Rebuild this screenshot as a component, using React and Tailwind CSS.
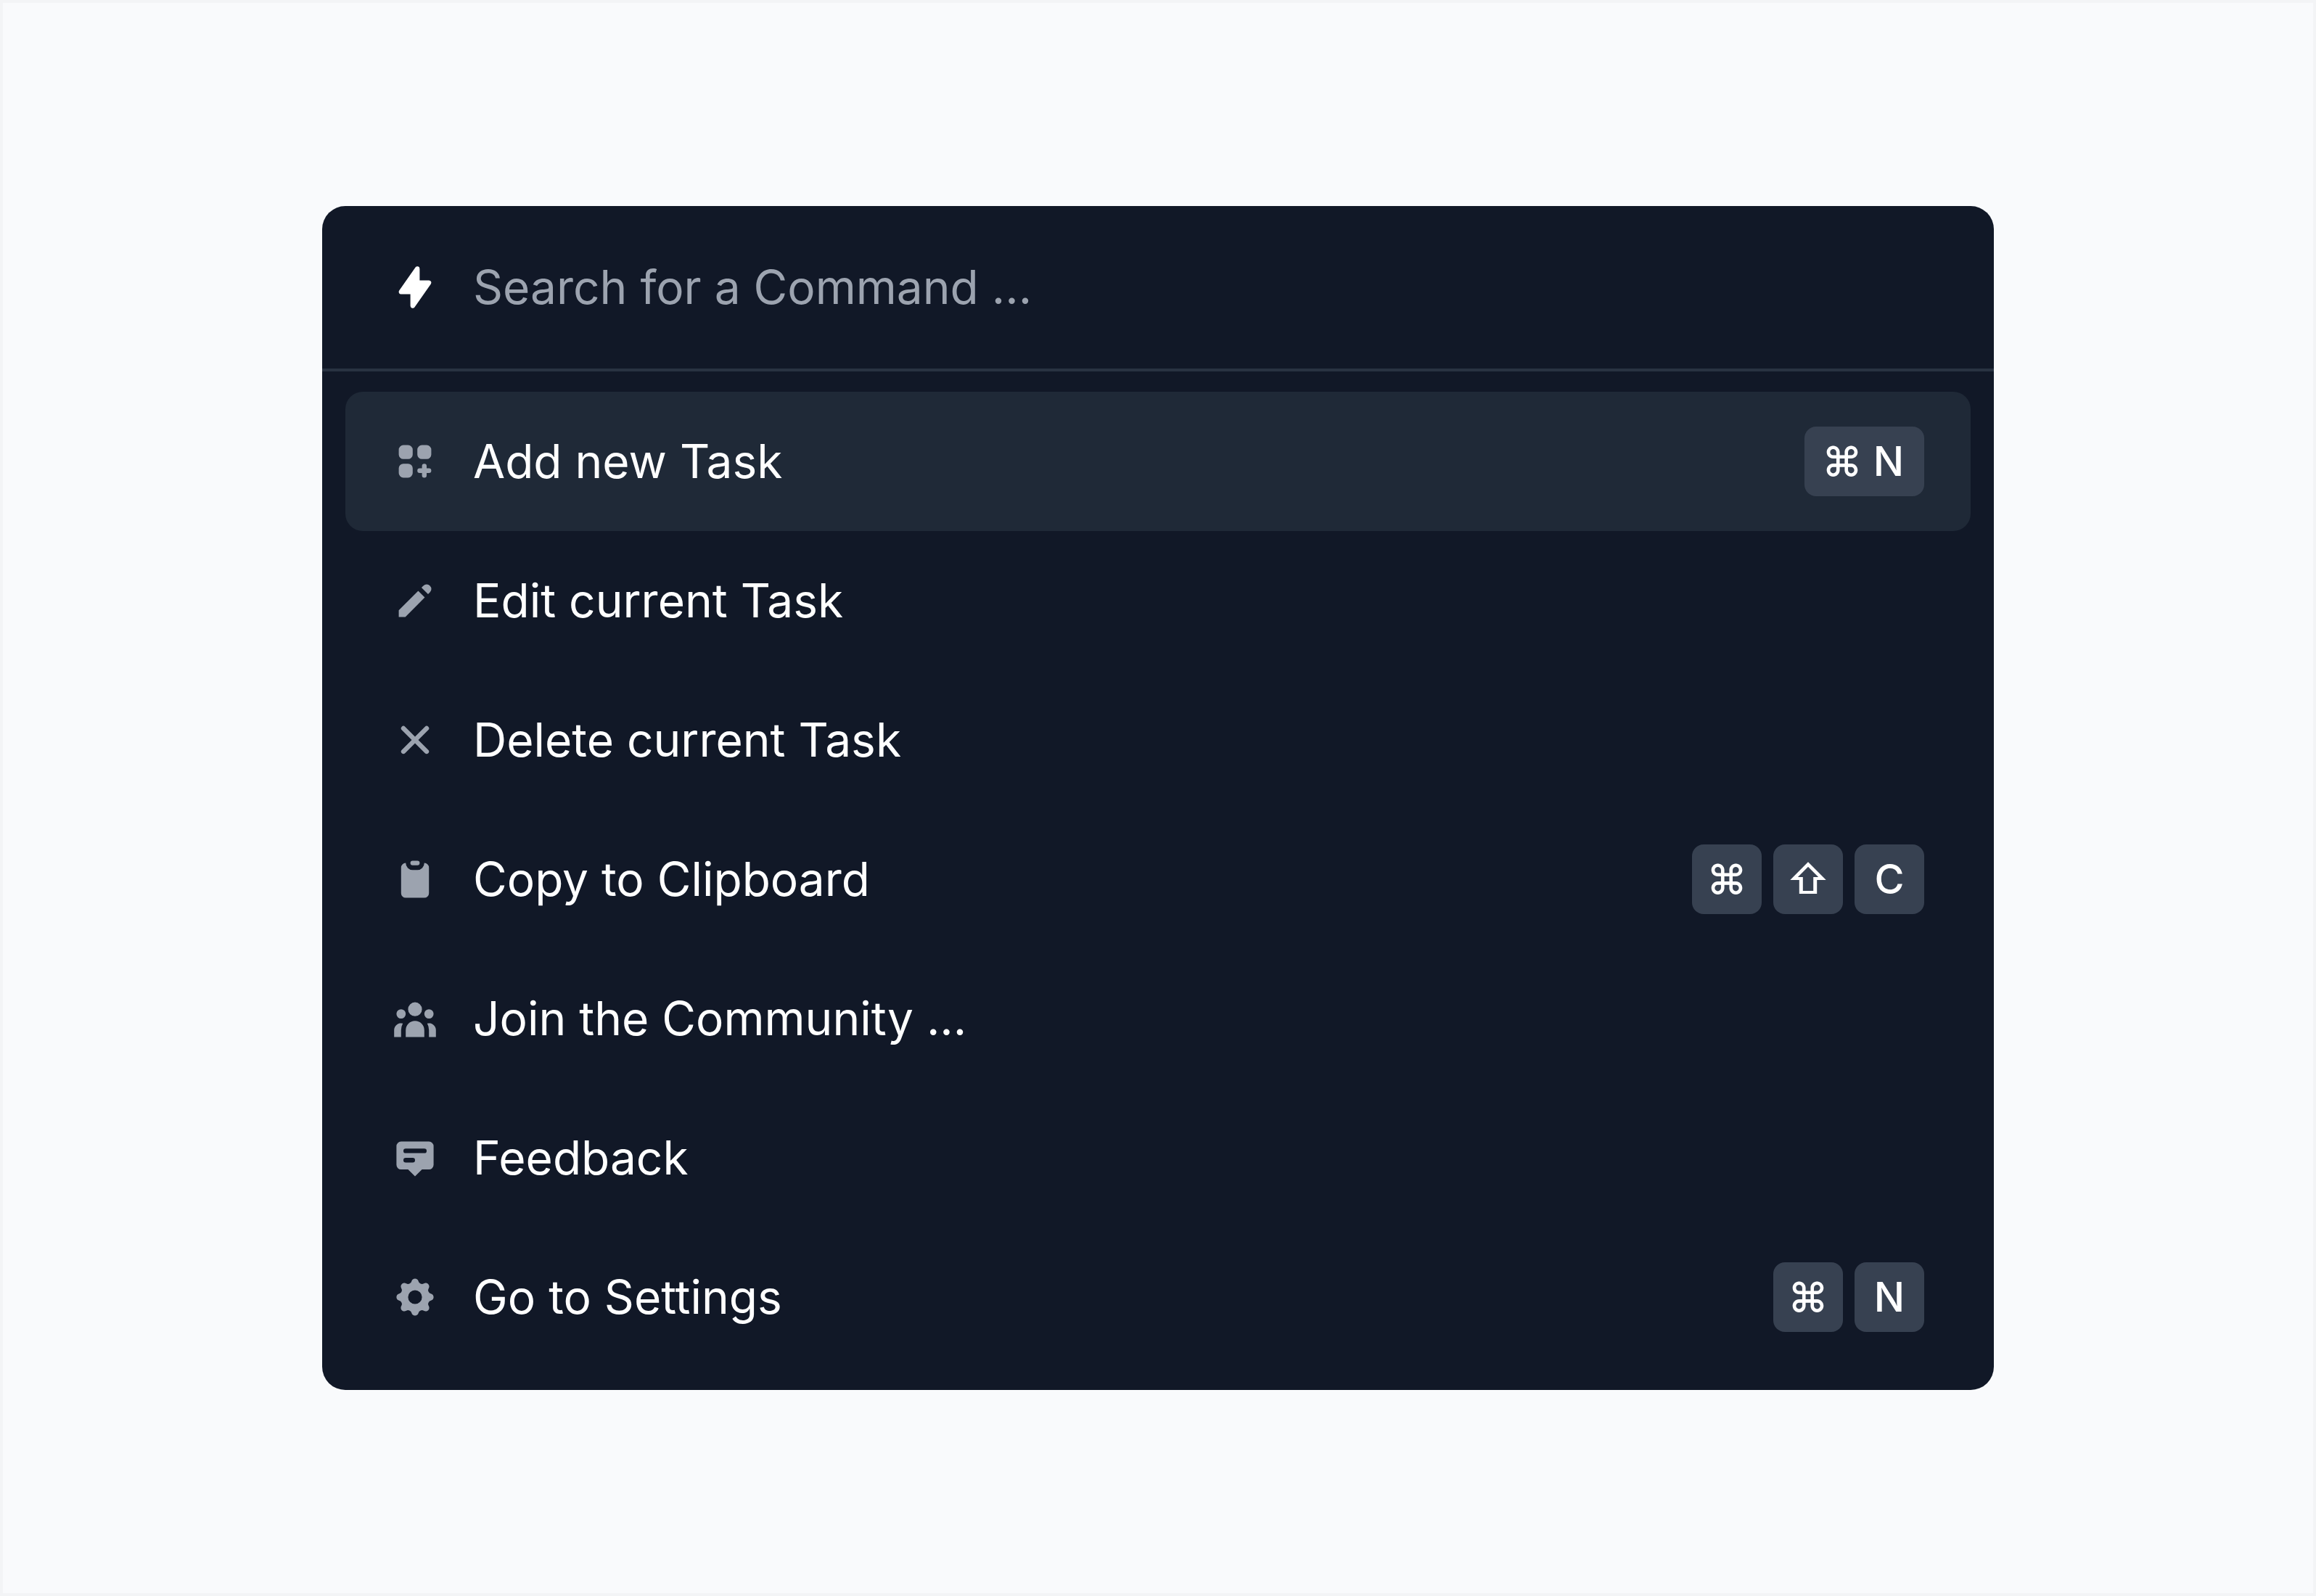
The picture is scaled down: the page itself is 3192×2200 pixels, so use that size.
import {
  HiAnnotation,
  HiClipboard,
  HiCog,
  HiLightningBolt,
  HiPencil,
  HiUserGroup,
  HiViewGridAdd,
  HiX,
} from "react-icons/hi";

const commands = [
  { label: "Add new Task", Icon: HiViewGridAdd, keys: ["⌘ N"], active: true },
  { label: "Edit current Task", Icon: HiPencil, keys: [] },
  { label: "Delete current Task", Icon: HiX, keys: [] },
  { label: "Copy to Clipboard", Icon: HiClipboard, keys: ["⌘", "⇧", "C"] },
  { label: "Join the Community ...", Icon: HiUserGroup, keys: [] },
  { label: "Feedback", Icon: HiAnnotation, keys: [] },
  { label: "Go to Settings", Icon: HiCog, keys: ["⌘", "N"] },
];

function Key({ children }) {
  const isCombo = children.length > 1;
  return (
    <kbd
      className={
        "flex h-24 items-center justify-center rounded-2xl bg-[#374151] font-['Inter',sans-serif] text-[56px] leading-none font-medium text-white " +
        (isCombo ? "pr-7 pl-6" : "w-24")
      }
    >
      {children}
    </kbd>
  );
}

function Command({ label, Icon, keys, active }) {
  return (
    <li>
      <button
        type="button"
        className={
          "flex h-48 w-full items-center gap-12 rounded-3xl px-16 text-left " +
          (active ? "bg-[#1f2937]" : "hover:bg-[#1f2937]")
        }
      >
        <Icon className="size-16 shrink-0 text-[#9ca3af]" aria-hidden="true" />
        <span className="flex-1 text-[64px] leading-[96px] text-white">{label}</span>
        {keys.length > 0 && (
          <span className="flex gap-4">
            {keys.map((key) => (
              <Key key={key}>{key}</Key>
            ))}
          </span>
        )}
      </button>
    </li>
  );
}

export default function App() {
  return (
    <main className="flex min-h-screen items-center justify-center border-4 border-[#f3f4f6] bg-[#f9fafc] font-['Inter',sans-serif]">
      <section
        aria-label="Command palette"
        className="w-full max-w-[2304px] overflow-hidden rounded-4xl bg-[#111827]"
      >
        <label className="flex h-57 items-center gap-12 border-b-4 border-[#293342] px-24">
          <HiLightningBolt className="size-16 shrink-0 text-white" aria-hidden="true" />
          <input
            type="text"
            aria-label="Search for a Command"
            placeholder="Search for a Command ..."
            className="min-w-0 flex-1 bg-transparent text-[64px] leading-[96px] text-white outline-none placeholder:text-[#9ca3af]"
          />
        </label>
        <ul className="px-8 pt-7 pb-8">
          {commands.map((command) => (
            <Command key={command.label} {...command} />
          ))}
        </ul>
      </section>
    </main>
  );
}
